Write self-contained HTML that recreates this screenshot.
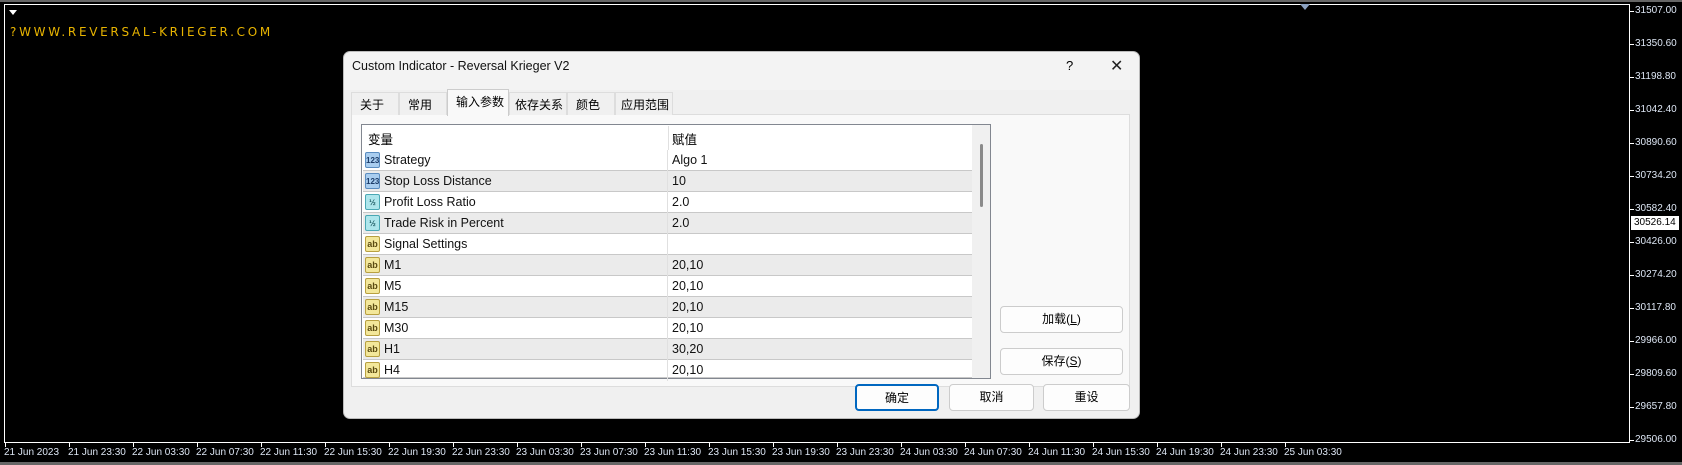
<!DOCTYPE html>
<html><head><meta charset="utf-8"><style>
*{margin:0;padding:0;box-sizing:border-box}
body{width:1682px;height:465px;background:#000;position:relative;overflow:hidden;font-family:"Liberation Sans","Noto Sans CJK SC",sans-serif}
.a{position:absolute}
.frame{left:4px;top:4px;width:1626px;height:439px;border:1px solid #fff;border-top:1px solid #fff}
.pl{position:absolute;left:1635px;color:#dde6f4;font-size:10px;font-family:"Liberation Sans",sans-serif}
.pt{position:absolute;left:1630px;width:4px;height:1px;background:#fff}
.dl{position:absolute;top:447px;color:#dde6f4;font-size:10px;font-family:"Liberation Sans",sans-serif;white-space:nowrap}
.dt{position:absolute;top:443px;width:1px;height:4px;background:#fff}
.dlg{left:343px;top:51px;width:797px;height:368px;background:#f0f0f0;border:1px solid #bbb;border-radius:7px;overflow:hidden}
.tab{position:absolute;top:92px;height:23px;font-size:12px;color:#000;padding:3px 0 0 8px;background:#f0f0f0;border:1px solid #ddd;border-bottom:none}
.row{position:absolute;left:363px;width:609px;height:21px;border-bottom:1px solid #c8c8c8;font-size:12.5px;color:#111}
.row span{position:absolute;top:3px}
.ic{position:absolute;left:2px;top:2px;width:15px;height:16px;border-radius:2px;font-size:8px;font-weight:bold;text-align:center;line-height:15px}
.btn{position:absolute;background:#fdfdfd;border:1px solid #ccc;border-radius:4px;font-size:12px;text-align:center;color:#000}
</style></head><body>
<div class="a" style="left:0;top:0;width:1682px;height:2px;background:#666"></div>
<div class="a frame"></div>
<div class="a" style="left:9px;top:10px;width:0;height:0;border-left:4px solid transparent;border-right:4px solid transparent;border-top:5px solid #fff"></div>
<div class="a" style="left:1300px;top:4px;width:0;height:0;border-left:5px solid transparent;border-right:5px solid transparent;border-top:6px solid #8aa0c0"></div>
<div class="a" style="left:10px;top:25px;color:#e8b400;font-size:12px;letter-spacing:2.7px;font-family:'DejaVu Sans','Liberation Sans',sans-serif">?WWW.REVERSAL-KRIEGER.COM</div>

<div class="pl" style="top:5px">31507.00</div><div class="pt" style="top:11px"></div>
<div class="pl" style="top:38px">31350.60</div><div class="pt" style="top:44px"></div>
<div class="pl" style="top:71px">31198.80</div><div class="pt" style="top:77px"></div>
<div class="pl" style="top:104px">31042.40</div><div class="pt" style="top:110px"></div>
<div class="pl" style="top:137px">30890.60</div><div class="pt" style="top:143px"></div>
<div class="pl" style="top:170px">30734.20</div><div class="pt" style="top:176px"></div>
<div class="pl" style="top:203px">30582.40</div><div class="pt" style="top:209px"></div>
<div class="a" style="left:1631px;top:216px;width:48px;height:14px;background:#fff;color:#000;font-size:10px;padding:1px 0 0 3px;font-family:'Liberation Sans',sans-serif">30526.14</div>
<div class="pl" style="top:236px">30426.00</div><div class="pt" style="top:242px"></div>
<div class="pl" style="top:269px">30274.20</div><div class="pt" style="top:275px"></div>
<div class="pl" style="top:302px">30117.80</div><div class="pt" style="top:308px"></div>
<div class="pl" style="top:335px">29966.00</div><div class="pt" style="top:341px"></div>
<div class="pl" style="top:368px">29809.60</div><div class="pt" style="top:374px"></div>
<div class="pl" style="top:401px">29657.80</div><div class="pt" style="top:407px"></div>
<div class="pl" style="top:434px">29506.00</div><div class="pt" style="top:440px"></div>

<div id="dates"></div>
<div class="a" style="left:0;top:462px;width:1682px;height:3px;background:#666"></div>

<div class="a dlg"></div>
<div class="a" style="left:344px;top:52px;width:795px;height:38px;background:#f3f3f3;border-radius:7px 7px 0 0"></div>
<div class="a" style="left:352px;top:59px;font-size:12.5px;color:#111">Custom Indicator - Reversal Krieger V2</div>
<div class="a" style="left:1066px;top:58px;font-size:13px">?</div>
<div class="a" style="left:1110px;top:56px;font-size:16px;color:#222">✕</div>
<div class="a" style="left:351px;top:114px;width:779px;height:273px;background:#f9f9f9;border:1px solid #ddd"></div>
<div class="tab" style="left:351px;width:48px">关于</div>
<div class="tab" style="left:399px;width:48px">常用</div>
<div class="tab" style="left:447px;width:62px;top:89px;height:27px;background:#f9f9f9;border-color:#ccc">输入参数</div>
<div class="tab" style="left:509px;width:58px;padding-left:5px">依存关系</div>
<div class="tab" style="left:567px;width:48px">颜色</div>
<div class="tab" style="left:615px;width:58px;padding-left:5px">应用范围</div>

<div class="a" style="left:361px;top:124px;width:630px;height:255px;background:#fff;border:1px solid #828790"></div>
<div class="a" style="left:368px;top:129px;font-size:12.5px">变量</div>
<div class="a" style="left:668px;top:126px;width:1px;height:252px;background:#e0e0e0"></div>
<div class="a" style="left:672px;top:129px;font-size:12.5px">赋值</div>
<div class="a" style="left:972px;top:125px;width:18px;height:253px;background:#f0f0f0"></div>
<div class="a" style="left:980px;top:144px;width:3px;height:63px;background:#8a8a8a;border-radius:2px"></div>
<div id="rows"></div>

<div class="btn" style="left:1000px;top:306px;width:123px;height:27px;line-height:25px">加载(<u>L</u>)</div>
<div class="btn" style="left:1000px;top:348px;width:123px;height:27px;line-height:25px">保存(<u>S</u>)</div>
<div class="btn" style="left:855px;top:384px;width:84px;height:27px;line-height:24px;border:2px solid #0067c0">确定</div>
<div class="btn" style="left:949px;top:384px;width:85px;height:27px;line-height:25px">取消</div>
<div class="btn" style="left:1043px;top:384px;width:87px;height:27px;line-height:25px">重设</div>

<script>
var d=["21 Jun 2023","21 Jun 23:30","22 Jun 03:30","22 Jun 07:30","22 Jun 11:30","22 Jun 15:30","22 Jun 19:30","22 Jun 23:30","23 Jun 03:30","23 Jun 07:30","23 Jun 11:30","23 Jun 15:30","23 Jun 19:30","23 Jun 23:30","24 Jun 03:30","24 Jun 07:30","24 Jun 11:30","24 Jun 15:30","24 Jun 19:30","24 Jun 23:30","25 Jun 03:30"];
var h="";d.forEach(function(t,i){var x=5+i*64;h+='<div class="dt" style="left:'+x+'px"></div><div class="dl" style="left:'+(x-1)+'px">'+t+'</div>'});
document.getElementById('dates').innerHTML=h;
var r=[["n","Strategy","Algo 1"],["n","Stop Loss Distance","10"],["f","Profit Loss Ratio","2.0"],["f","Trade Risk in Percent","2.0"],["s","Signal Settings",""],["s","M1","20,10"],["s","M5","20,10"],["s","M15","20,10"],["s","M30","20,10"],["s","H1","30,20"],["s","H4","20,10"]];
h="";r.forEach(function(a,i){var y=150+i*21;var bg=i%2?"#ebebeb":"#fff";var ic=a[0]=="n"?'<div class="ic" style="background:#a9cdef;border:1px solid #5a8cc0;color:#1d3d6a">123</div>':a[0]=="f"?'<div class="ic" style="background:#aee6ec;border:1px solid #4aa8b4;color:#1d5a62">½</div>':'<div class="ic" style="background:#f3e79a;border:1px solid #b8a040;color:#5a4a10;font-size:9px">ab</div>';
var hh=i==10?18:21;h+='<div class="row" style="top:'+y+'px;height:'+hh+'px;background:'+bg+'">'+ic+'<span style="left:21px">'+a[1]+'</span><span style="left:309px">'+a[2]+'</span><div style="position:absolute;left:304px;top:0;width:1px;height:21px;background:#e0e0e0"></div></div>'});
document.getElementById('rows').innerHTML=h;
</script>
</body></html>
